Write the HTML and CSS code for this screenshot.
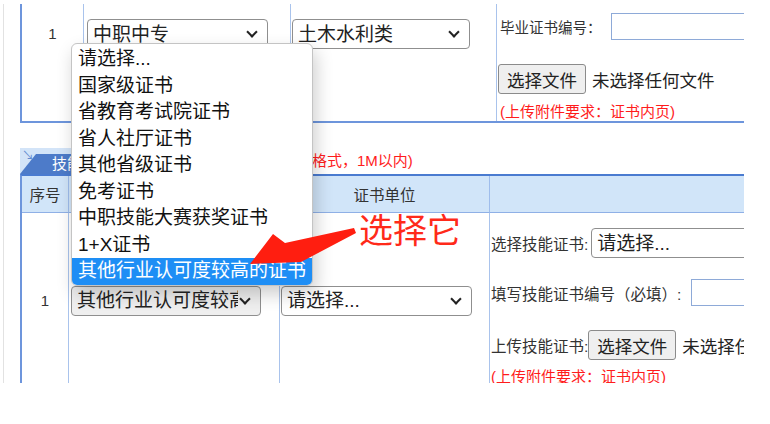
FILE: index.html
```html
<!DOCTYPE html>
<html lang="zh-CN">
<head>
    <meta charset="UTF-8">
    <meta name="viewport" content="width=device-width, initial-scale=1.0">
    <title>学历与技能证书</title>
    <link rel="stylesheet" href="styles.css">
</head>
<body>
    <div class="page">
        <div class="edu-row">
            <div class="cell-no">1</div>
            <div class="cell-pick">
                <span class="sel w181"><select><option>中职中专</option></select></span>
            </div>
            <div class="cell-pick alt">
                <span class="sel w178"><select><option>土木水利类</option></select></span>
            </div>
            <div class="cell-info">
                <div class="line">
                    <label class="lbl">毕业证书编号：</label>
                    <input type="text" class="txt txt-edu">
                </div>
                <div class="line line-file">
                    <button class="file-btn pull2">选择文件</button>
                    <span class="file-name">未选择任何文件</span>
                </div>
                <p class="note note-edu">(上传附件要求：证书内页)</p>
            </div>
        </div>

        <div class="tab-bar">
            <div class="tab-head">
                <span class="tab-icon">↘</span>
                <span class="tab-title">技能证书</span>
            </div>
            <span class="note tab-note">(上传附件要求：jpg格式，1M以内)</span>
        </div>

        <div class="skill">
            <div class="th">序号</div>
            <div class="th">证书类别</div>
            <div class="th">证书单位</div>
            <div class="th"></div>

            <div class="td td-no">1</div>
            <div class="td td-pick">
                <span class="sel w190 is-open"><select><option>其他行业认可度较高的证书</option></select></span>
            </div>
            <div class="td td-pick alt">
                <span class="sel w191"><select><option>请选择...</option></select></span>
            </div>
            <div class="td td-info">
                <div class="line">
                    <label class="lbl lbl-skill">选择技能证书:</label>
                    <span class="sel w300 gap3"><select><option>请选择...</option></select></span>
                </div>
                <div class="line line-code">
                    <label class="lbl lbl-skill">填写技能证书编号（必填）:</label>
                    <input type="text" class="txt txt-skill">
                </div>
                <div class="line line-upload">
                    <label class="lbl lbl-skill">上传技能证书:</label>
                    <button class="file-btn">选择文件</button>
                    <span class="file-name">未选择任何文件</span>
                </div>
                <p class="note note-skill">(上传附件要求：证书内页)</p>
            </div>
        </div>

        <!-- the open list of the skill type select -->
        <div class="listbox">
            <div class="opt">请选择...</div>
            <div class="opt">国家级证书</div>
            <div class="opt">省教育考试院证书</div>
            <div class="opt">省人社厅证书</div>
            <div class="opt">其他省级证书</div>
            <div class="opt">免考证书</div>
            <div class="opt">中职技能大赛获奖证书</div>
            <div class="opt">1+X证书</div>
            <div class="opt is-active">其他行业认可度较高的证书</div>
        </div>

        <div class="callout">选择它</div>
        <svg class="callout-arrow" viewBox="246 224 116 50">
            <polygon points="250,264 273,234 285,243 354,228 356,233 301,262" fill="#ff1e10"/>
        </svg>
    </div>
</body>
</html>
```

FILE: styles.css
```css
* {
    margin: 0;
    padding: 0;
    box-sizing: border-box;
}

body {
    font-family: "Liberation Sans", "Noto Sans CJK SC", sans-serif;
    color: #333;
    background: #fff;
}

.page {
    position: relative;
    width: 741px;
    height: 379px;
    margin: 4px 0 0 3px;
    border-left: 1px solid #e2e2e2;
    overflow: hidden;
}

/* selects */
.sel {
    position: relative;
    display: inline-flex;
}

.sel select {
    appearance: none;
    -webkit-appearance: none;
    width: 100%;
    height: 30px;
    padding: 0 22px 0 5px;
    font-family: inherit;
    font-size: 19px;
    color: #222;
    background: #fff;
    border: 1px solid #8f8f8f;
    border-radius: 4px;
}

.sel::after {
    content: "";
    position: absolute;
    right: 12px;
    top: 50%;
    width: 6px;
    height: 6px;
    border-right: 2.5px solid #222;
    border-bottom: 2.5px solid #222;
    transform: translateY(-75%) rotate(45deg);
    pointer-events: none;
}

.sel.is-open select {
    background: #efefef;
}

.w181 { width: 181px; }
.w178 { width: 178px; }
.w190 { width: 190px; }
.w191 { width: 191px; }
.w300 { width: 300px; }
.gap3 { margin-left: 3px; }
.pull2 { margin-left: -2px; }

.line {
    display: flex;
    align-items: center;
    white-space: nowrap;
}

.lbl {
    font-size: 14.5px;
    color: #333;
}

.lbl-skill {
    font-size: 15.5px;
}

.txt {
    width: 400px;
    height: 27px;
    border: 1px solid #8eaad8;
    background: #fff;
}

.txt-edu { margin-left: 9px; }
.txt-skill { margin-left: 10px; }

.file-btn {
    height: 30px;
    padding: 0 8px;
    font-family: inherit;
    font-size: 17.5px;
    color: #222;
    background: #efefef;
    border: 1px solid #8b8b8b;
    border-radius: 3px;
}

.file-name {
    margin-left: 6px;
    font-size: 17.5px;
    color: #222;
}

.note {
    color: #ff1c1c;
    font-size: 15px;
    line-height: 18px;
    white-space: nowrap;
}

/* education row */
.edu-row {
    display: grid;
    grid-template-columns: 62px 207px 206px 620px;
    width: max-content;
    margin-left: 16px;
    border-left: 2px solid #6d95dc;
    border-bottom: 2px solid #6d95dc;
}

.edu-row > div {
    border-right: 1px solid #a9c3ec;
}

.cell-no {
    padding-top: 15px;
    text-align: center;
    font-size: 15px;
    line-height: 30px;
}

.cell-pick {
    padding: 15px 0 0 3px;
}

.cell-pick.alt {
    padding-left: 1px;
}

.cell-info {
    padding: 9px 0 0 3px;
}

.line-file { margin-top: 24px; }
.note-edu { margin-top: 9px; }

/* skill tab */
.tab-bar {
    display: flex;
    align-items: center;
    height: 26px;
    margin: 25px 0 0 16px;
}

.tab-head {
    display: flex;
    width: 140px;
    height: 26px;
    background: #d3e4f8;
}

.tab-icon {
    width: 14px;
    padding: 2px 0 0 2px;
    font-size: 12px;
    line-height: 12px;
    color: #5f88cf;
}

.tab-title {
    flex: 1;
    margin: 6px 0 0 -14px;
    padding-left: 32px;
    font-size: 15px;
    line-height: 20px;
    color: #fff;
    background: #4d7bc9;
    clip-path: polygon(16px 0, 100% 0, 100% 100%, 0 100%);
}

.tab-note {
    margin-left: 22px;
}

/* skill table */
.skill {
    display: grid;
    grid-template-columns: 47px 211px 210px 620px;
    width: max-content;
    margin-left: 16px;
    border-top: 2px solid #4a7bd0;
    border-left: 2px solid #6d95dc;
}

.th {
    display: flex;
    align-items: center;
    justify-content: center;
    height: 37px;
    font-size: 15.5px;
    color: #333;
    background: #d1e5f9;
    border-right: 1px solid #9fbdec;
    border-bottom: 1px solid #8fb0e6;
}

.td {
    display: flex;
    align-items: center;
    border-right: 1px solid #a9c3ec;
}

.td-no {
    justify-content: center;
    font-size: 15px;
}

.td-pick { padding-left: 2px; }
.td-pick.alt { padding-left: 1px; }

.td-info {
    display: block;
    padding: 15px 0 2px 1px;
}

.line-code { margin-top: 21px; }
.line-upload { margin-top: 24px; }
.note-skill { margin-top: 8px; }

/* open option list */
.listbox {
    position: absolute;
    left: 67px;
    top: 39px;
    width: 242px;
    padding-top: 2px;
    background: #fff;
    border: 1px solid #c4c4c4;
    border-radius: 6px;
    box-shadow: 3px 8px 18px rgba(0, 0, 0, 0.2);
    overflow: hidden;
}

.opt {
    height: 26.5px;
    padding-left: 6px;
    font-size: 19px;
    line-height: 26.5px;
    color: #111;
    white-space: nowrap;
}

.opt.is-active {
    color: #fff;
    background: #1e8ef5;
}

/* annotation */
.callout {
    position: absolute;
    left: 355px;
    top: 208px;
    font-family: "Noto Sans CJK SC", sans-serif;
    font-size: 34px;
    line-height: 1;
    color: #ff2a1a;
}

.callout-arrow {
    position: absolute;
    left: 242px;
    top: 220px;
    width: 116px;
    height: 50px;
}
```
